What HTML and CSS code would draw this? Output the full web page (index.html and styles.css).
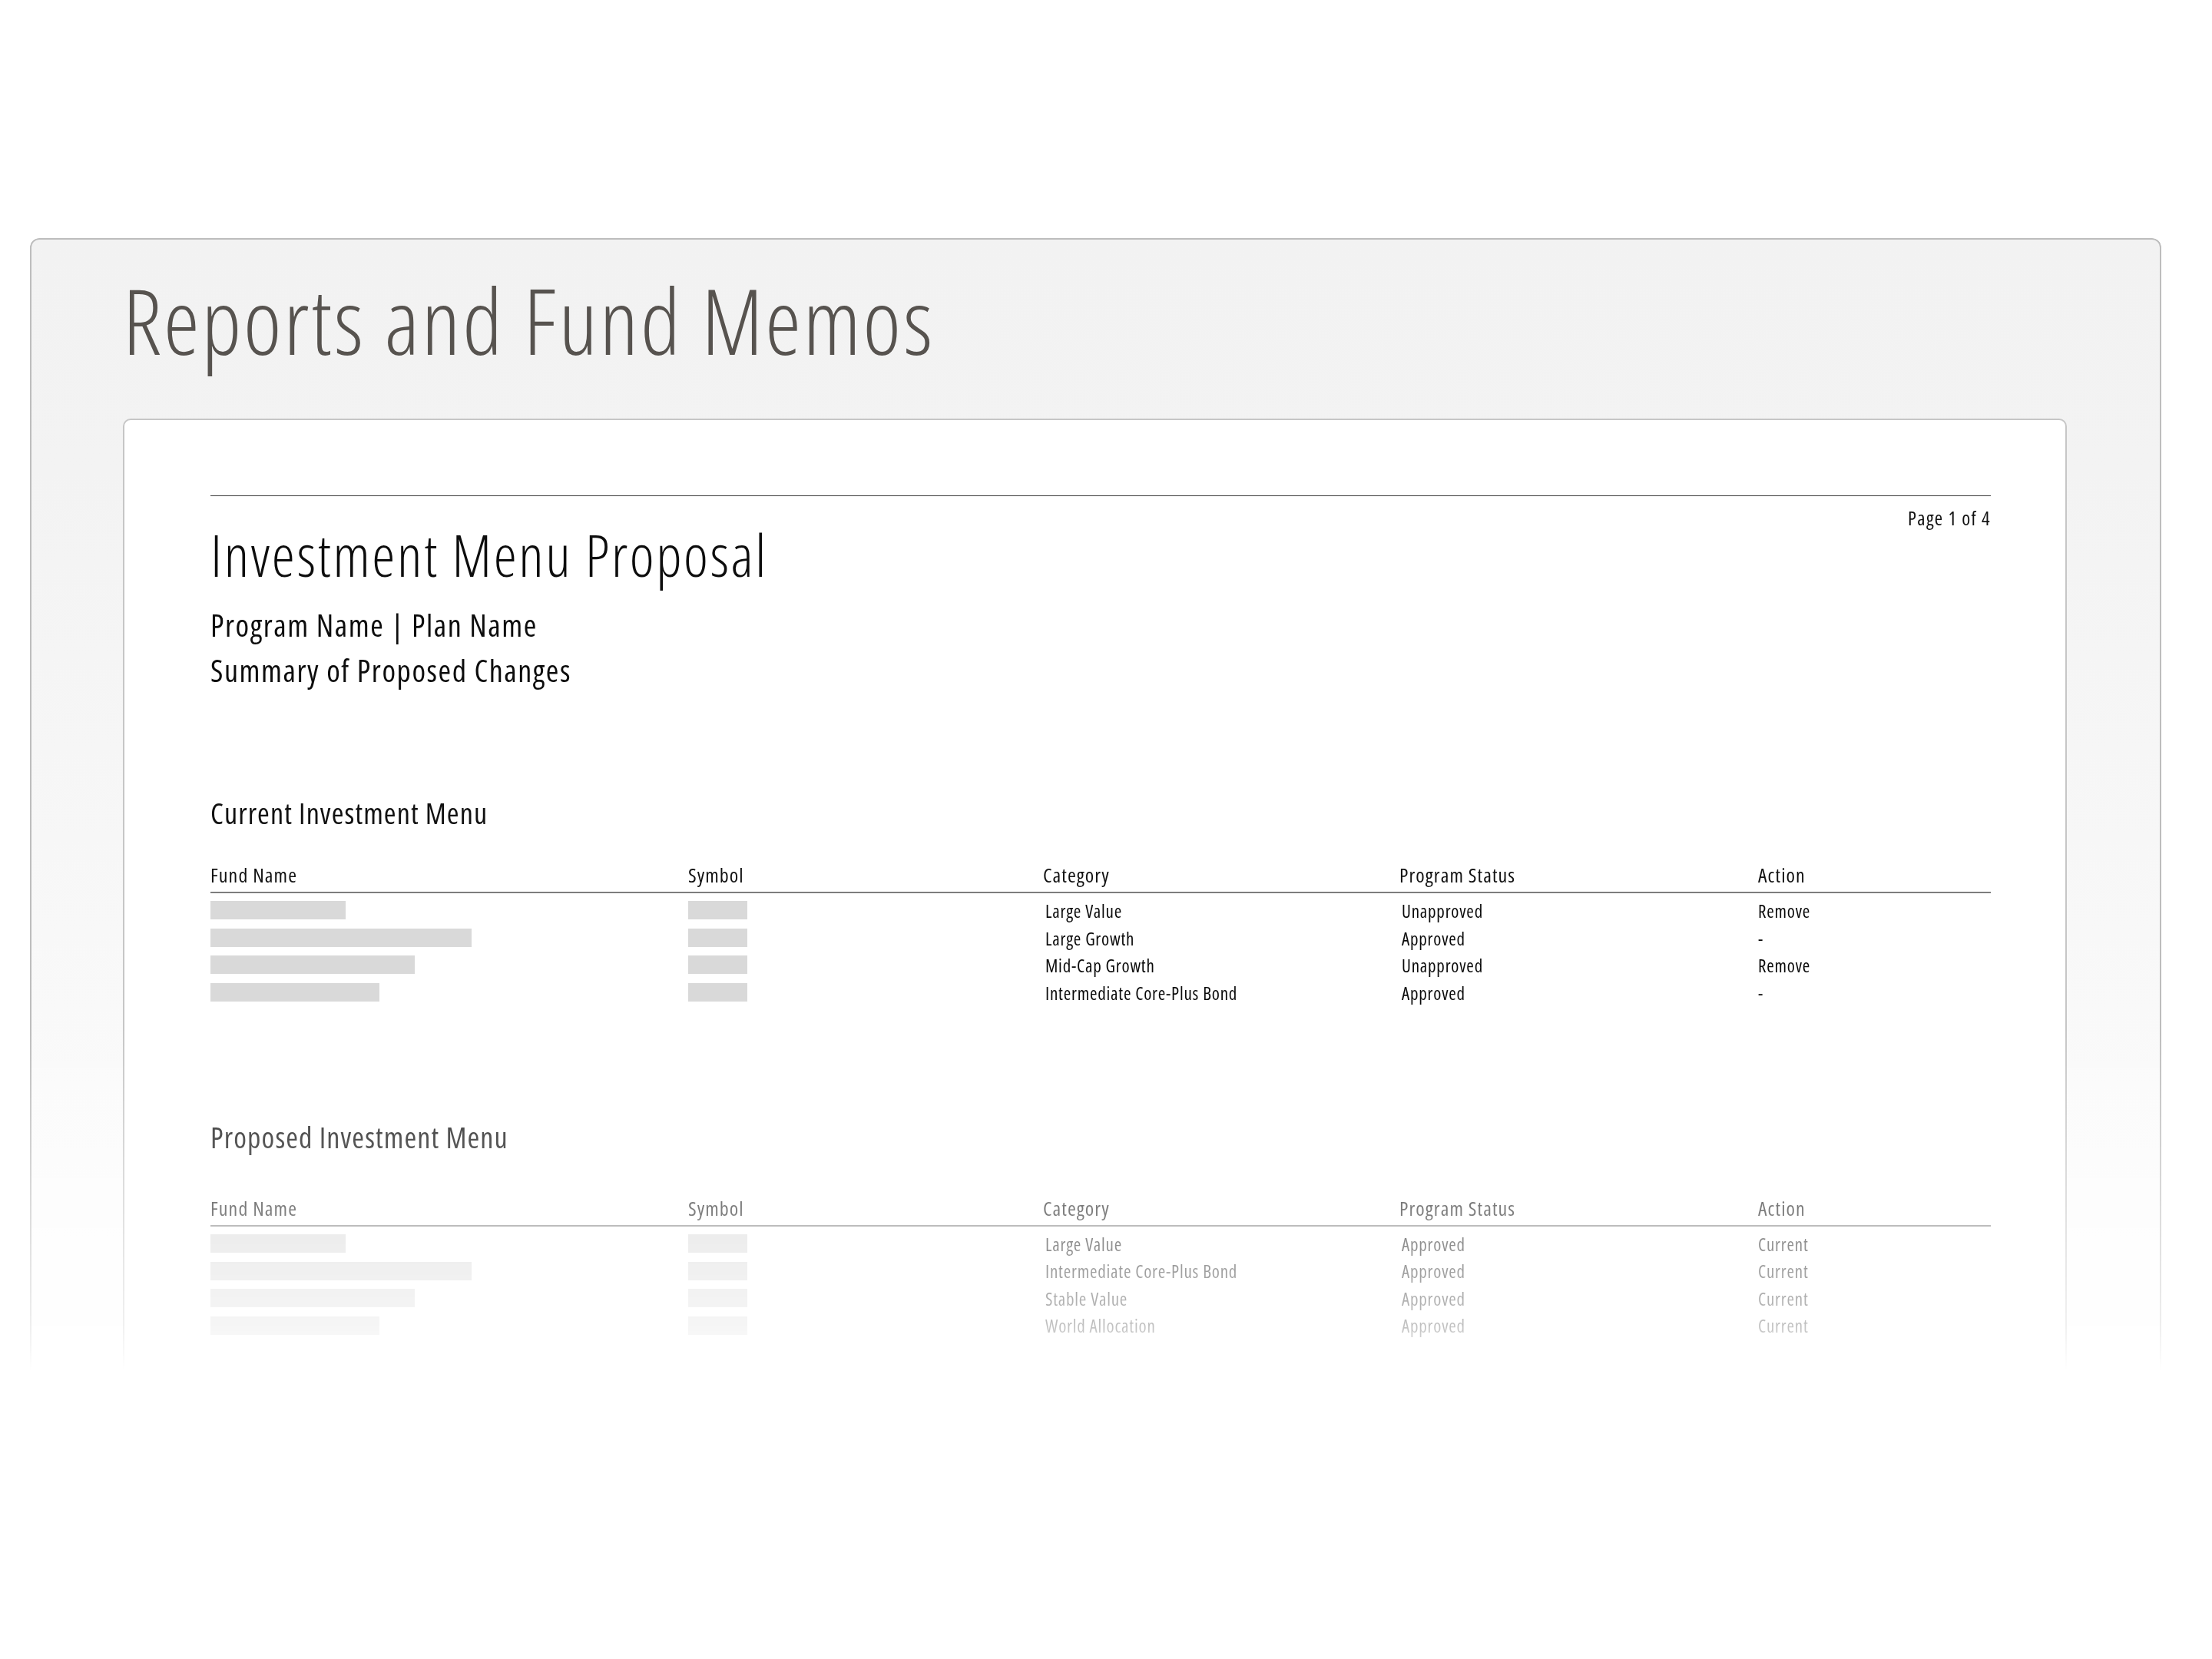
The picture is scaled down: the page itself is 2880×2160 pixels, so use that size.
FILE: index.html
```html
<!DOCTYPE html>
<html lang="en">
<head>
<meta charset="utf-8">
<title>Reports and Fund Memos</title>
<link rel="stylesheet" href="styles.css">
</head>
<body>
<main class="stage">
  <section class="board">
    <h1 class="board-title">Reports and Fund Memos</h1>
    <article class="paper">
      <header class="paper-head">
        <div class="paper-titles">
          <h2 class="doc-title">Investment Menu Proposal</h2>
          <p class="doc-sub doc-sub-first">Program Name | Plan Name</p>
          <p class="doc-sub">Summary of Proposed Changes</p>
        </div>
        <div class="page-count">Page 1 of 4</div>
      </header>

      <section class="menu menu-current">
        <h3 class="menu-title">Current Investment Menu</h3>
        <div class="grid grid-head">
          <div class="cell">Fund Name</div>
          <div class="cell">Symbol</div>
          <div class="cell">Category</div>
          <div class="cell">Program Status</div>
          <div class="cell">Action</div>
        </div>
        <div class="grid-body">
          <div class="grid grid-row">
            <div class="cell"><span class="bar" style="width:176px"></span></div>
            <div class="cell"><span class="bar bar-sym"></span></div>
            <div class="cell txt cell-in">Large Value</div>
            <div class="cell txt cell-in">Unapproved</div>
            <div class="cell txt">Remove</div>
          </div>
          <div class="grid grid-row">
            <div class="cell"><span class="bar" style="width:340px"></span></div>
            <div class="cell"><span class="bar bar-sym"></span></div>
            <div class="cell txt cell-in">Large Growth</div>
            <div class="cell txt cell-in">Approved</div>
            <div class="cell txt">-</div>
          </div>
          <div class="grid grid-row">
            <div class="cell"><span class="bar" style="width:266px"></span></div>
            <div class="cell"><span class="bar bar-sym"></span></div>
            <div class="cell txt cell-in">Mid-Cap Growth</div>
            <div class="cell txt cell-in">Unapproved</div>
            <div class="cell txt">Remove</div>
          </div>
          <div class="grid grid-row">
            <div class="cell"><span class="bar" style="width:220px"></span></div>
            <div class="cell"><span class="bar bar-sym"></span></div>
            <div class="cell txt cell-in">Intermediate Core-Plus Bond</div>
            <div class="cell txt cell-in">Approved</div>
            <div class="cell txt">-</div>
          </div>
        </div>
      </section>

      <section class="menu menu-proposed">
        <h3 class="menu-title">Proposed Investment Menu</h3>
        <div class="grid grid-head">
          <div class="cell">Fund Name</div>
          <div class="cell">Symbol</div>
          <div class="cell">Category</div>
          <div class="cell">Program Status</div>
          <div class="cell">Action</div>
        </div>
        <div class="grid-body">
          <div class="grid grid-row">
            <div class="cell"><span class="bar" style="width:176px"></span></div>
            <div class="cell"><span class="bar bar-sym"></span></div>
            <div class="cell txt cell-in">Large Value</div>
            <div class="cell txt cell-in">Approved</div>
            <div class="cell txt">Current</div>
          </div>
          <div class="grid grid-row">
            <div class="cell"><span class="bar" style="width:340px"></span></div>
            <div class="cell"><span class="bar bar-sym"></span></div>
            <div class="cell txt cell-in">Intermediate Core-Plus Bond</div>
            <div class="cell txt cell-in">Approved</div>
            <div class="cell txt">Current</div>
          </div>
          <div class="grid grid-row">
            <div class="cell"><span class="bar" style="width:266px"></span></div>
            <div class="cell"><span class="bar bar-sym"></span></div>
            <div class="cell txt cell-in">Stable Value</div>
            <div class="cell txt cell-in">Approved</div>
            <div class="cell txt">Current</div>
          </div>
          <div class="grid grid-row">
            <div class="cell"><span class="bar" style="width:220px"></span></div>
            <div class="cell"><span class="bar bar-sym"></span></div>
            <div class="cell txt cell-in">World Allocation</div>
            <div class="cell txt cell-in">Approved</div>
            <div class="cell txt">Current</div>
          </div>
        </div>
      </section>
    </article>
  </section>
</main>
</body>
</html>
```

FILE: styles.css
```css
* {
  box-sizing: border-box;
}

html, body {
  margin: 0;
  padding: 0;
  background: #ffffff;
}

body {
  font-family: "Open Sans", "DejaVu Sans Condensed", sans-serif;
  font-stretch: 75%;
  color: #111111;
}

h1, h2, h3, p {
  margin: 0;
  font-weight: 400;
}

.stage {
  padding: 310px 0 0 39px;
  width: 2880px;
  height: 2160px;
}

.board {
  width: 2775px;
  min-height: 1620px;
  border: 2px solid #bdbdbd;
  border-radius: 12px;
  padding: 34px 121px 0 119px;
  background: linear-gradient(to bottom, #f2f2f2 0px, #f3f3f3 300px, #f8f8f8 900px, #fdfdfd 1400px);
  -webkit-mask-image: linear-gradient(to bottom, #000 1028px, rgba(0,0,0,0.26) 1415px, transparent 1475px);
  mask-image: linear-gradient(to bottom, #000 1028px, rgba(0,0,0,0.26) 1415px, transparent 1475px);
}

.board-title {
  font-weight: 300;
  font-size: 118px;
  line-height: 141px;
  letter-spacing: 2.9px;
  color: #57534f;
}

.paper {
  margin-top: 58px;
  min-height: 1350px;
  border: 2px solid #c6c6c6;
  border-radius: 10px;
  background: #ffffff;
  padding: 98px 97px 0 112px;
}

.paper-head {
  border-top: 1px solid #3a3a3a;
  padding-top: 13px;
  display: flex;
  justify-content: space-between;
  align-items: flex-start;
}

.page-count {
  font-size: 25px;
  line-height: 30px;
  letter-spacing: 1.3px;
  color: #111111;
}

.doc-title {
  margin-top: 21px;
  font-weight: 300;
  font-size: 76px;
  line-height: 84px;
  letter-spacing: 2.6px;
  color: #0d0d0d;
}

.doc-sub {
  font-size: 40px;
  line-height: 59px;
  letter-spacing: 1.55px;
  color: #0d0d0d;
}

.doc-sub-first {
  margin-top: 20px;
}

.menu-title {
  font-size: 38px;
  line-height: 46px;
  letter-spacing: 1.1px;
  color: #111111;
}

.menu-current .menu-title {
  margin-top: 133px;
}

.menu-proposed .menu-title {
  margin-top: 148.6px;
}

.grid {
  display: grid;
  grid-template-columns: 622px 462px 464px 467px 1fr;
}

.grid-head {
  font-size: 26px;
  line-height: 30px;
  letter-spacing: 1.05px;
  padding-bottom: 7px;
  border-bottom: 2px solid #7d7d7d;
  color: #111111;
}

.menu-current .grid-head {
  margin-top: 43px;
}

.menu-proposed .grid-head {
  margin-top: 54.7px;
}

.grid-body {
  padding-top: 3px;
}

.grid-row {
  height: 35.6px;
  font-size: 23px;
  line-height: 35.6px;
  letter-spacing: 0.78px;
  color: #0a0a0a;
}

.cell {
  display: flex;
  align-items: center;
  white-space: nowrap;
}

.txt {
  padding-top: 3px;
}

.cell-in {
  padding-left: 3px;
}

.bar {
  display: block;
  height: 24px;
  background: #d9d9d9;
}

.bar-sym {
  width: 77px;
}
```
